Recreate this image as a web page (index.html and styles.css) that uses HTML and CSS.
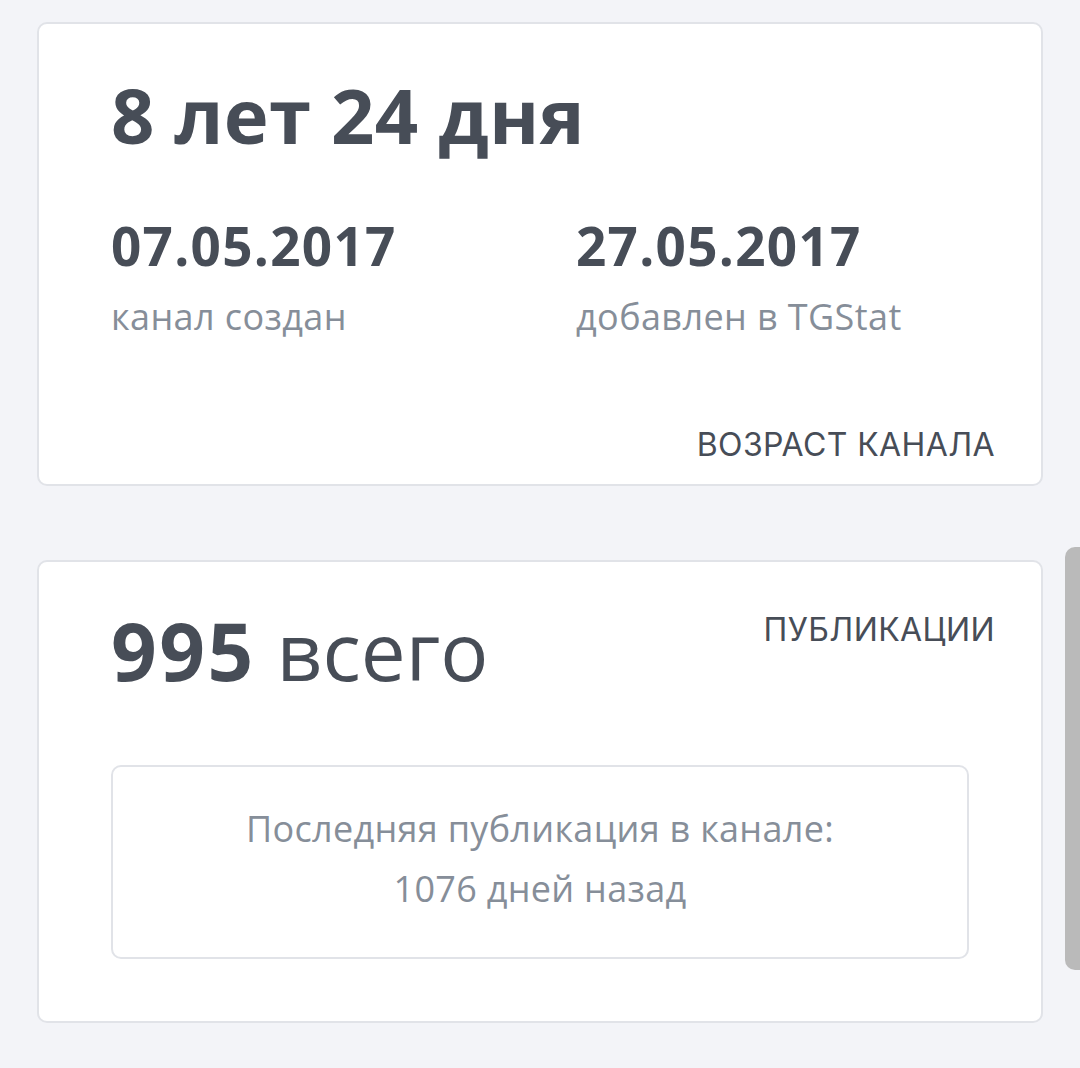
FILE: index.html
```html
<!DOCTYPE html>
<html lang="ru">

<head>
    <meta charset="UTF-8">
    <meta name="viewport" content="width=device-width, initial-scale=1.0">
    <title>Канал - TGStat</title>
    <link rel="stylesheet" href="styles.css">
</head>

<body>
    <div class="page">
        <div class="card card-age">
            <h1 class="age">8 лет 24 дня</h1>
            <div class="dates">
                <div class="date">
                    <div class="date-value">07.05.2017</div>
                    <div class="date-label">канал создан</div>
                </div>
                <div class="date">
                    <div class="date-value">27.05.2017</div>
                    <div class="date-label">добавлен в TGStat</div>
                </div>
            </div>
            <div class="card-title bottom">ВОЗРАСТ КАНАЛА</div>
        </div>

        <div class="card card-posts">
            <div class="posts-head">
                <div class="posts-total"><b>995</b> всего</div>
                <div class="card-title">ПУБЛИКАЦИИ</div>
            </div>
            <div class="last-post">
                Последняя публикация в канале:<br>
                1076 дней назад
            </div>
        </div>
    </div>

    <div class="scrollbar"></div>
</body>

</html>
```

FILE: styles.css
```css
body {
    font-family: "Open Sans", "Noto Sans", sans-serif;
    background-color: #f3f4f8;
    margin: 0;
    padding: 0;
    color: #474d57;
}

.page {
    padding: 22px 37px 40px 37px;
    display: flex;
    flex-direction: column;
    gap: 74px;
    width: 1006px;
}

.card {
    background-color: #fff;
    border: 2px solid #e1e3e8;
    border-radius: 10px;
    box-sizing: border-box;
}

.card-age {
    height: 464px;
    padding: 46px 46px 0 72px;
    display: flex;
    flex-direction: column;
}

.age {
    margin: 0;
    font-size: 76px;
    font-weight: 700;
    line-height: 90px;
    letter-spacing: 0.2px;
}

.dates {
    display: flex;
    margin-top: 56px;
}

.date {
    width: 465px;
    flex-shrink: 0;
}

.date:last-child {
    width: auto;
    flex-shrink: 1;
}

.date-value {
    font-size: 53px;
    font-weight: 700;
    line-height: 60px;
    letter-spacing: 1.3px;
}

.date-label {
    font-size: 36px;
    color: #868e99;
    margin-top: 18px;
    line-height: 46px;
    letter-spacing: 0.4px;
}

.card-title {
    font-family: "Inter", "Noto Sans", sans-serif;
    font-size: 32px;
    letter-spacing: 0.4px;
    color: #474d57;
}

.card-title.bottom {
    align-self: flex-end;
    margin-top: auto;
    margin-bottom: 20px;
}

.card-posts {
    height: 463px;
    padding: 36px 46px 0 72px;
}

.posts-head {
    display: flex;
    justify-content: space-between;
    align-items: flex-start;
}

.posts-total {
    font-size: 80px;
    line-height: 104px;
}

.posts-total b {
    font-weight: 700;
    letter-spacing: 2.5px;
}

.posts-head .card-title {
    margin-top: 12px;
}

.last-post {
    margin-top: 63px;
    margin-right: 26px;
    height: 194px;
    box-sizing: border-box;
    border: 2px solid #e1e3e8;
    border-radius: 10px;
    padding-top: 32px;
    text-align: center;
    font-size: 36px;
    line-height: 60px;
    letter-spacing: 0.3px;
    color: #868e99;
}

.scrollbar {
    position: absolute;
    top: 547px;
    right: 0;
    width: 15px;
    height: 423px;
    background-color: #bababa;
    border-radius: 10px 0 0 10px;
}
```
